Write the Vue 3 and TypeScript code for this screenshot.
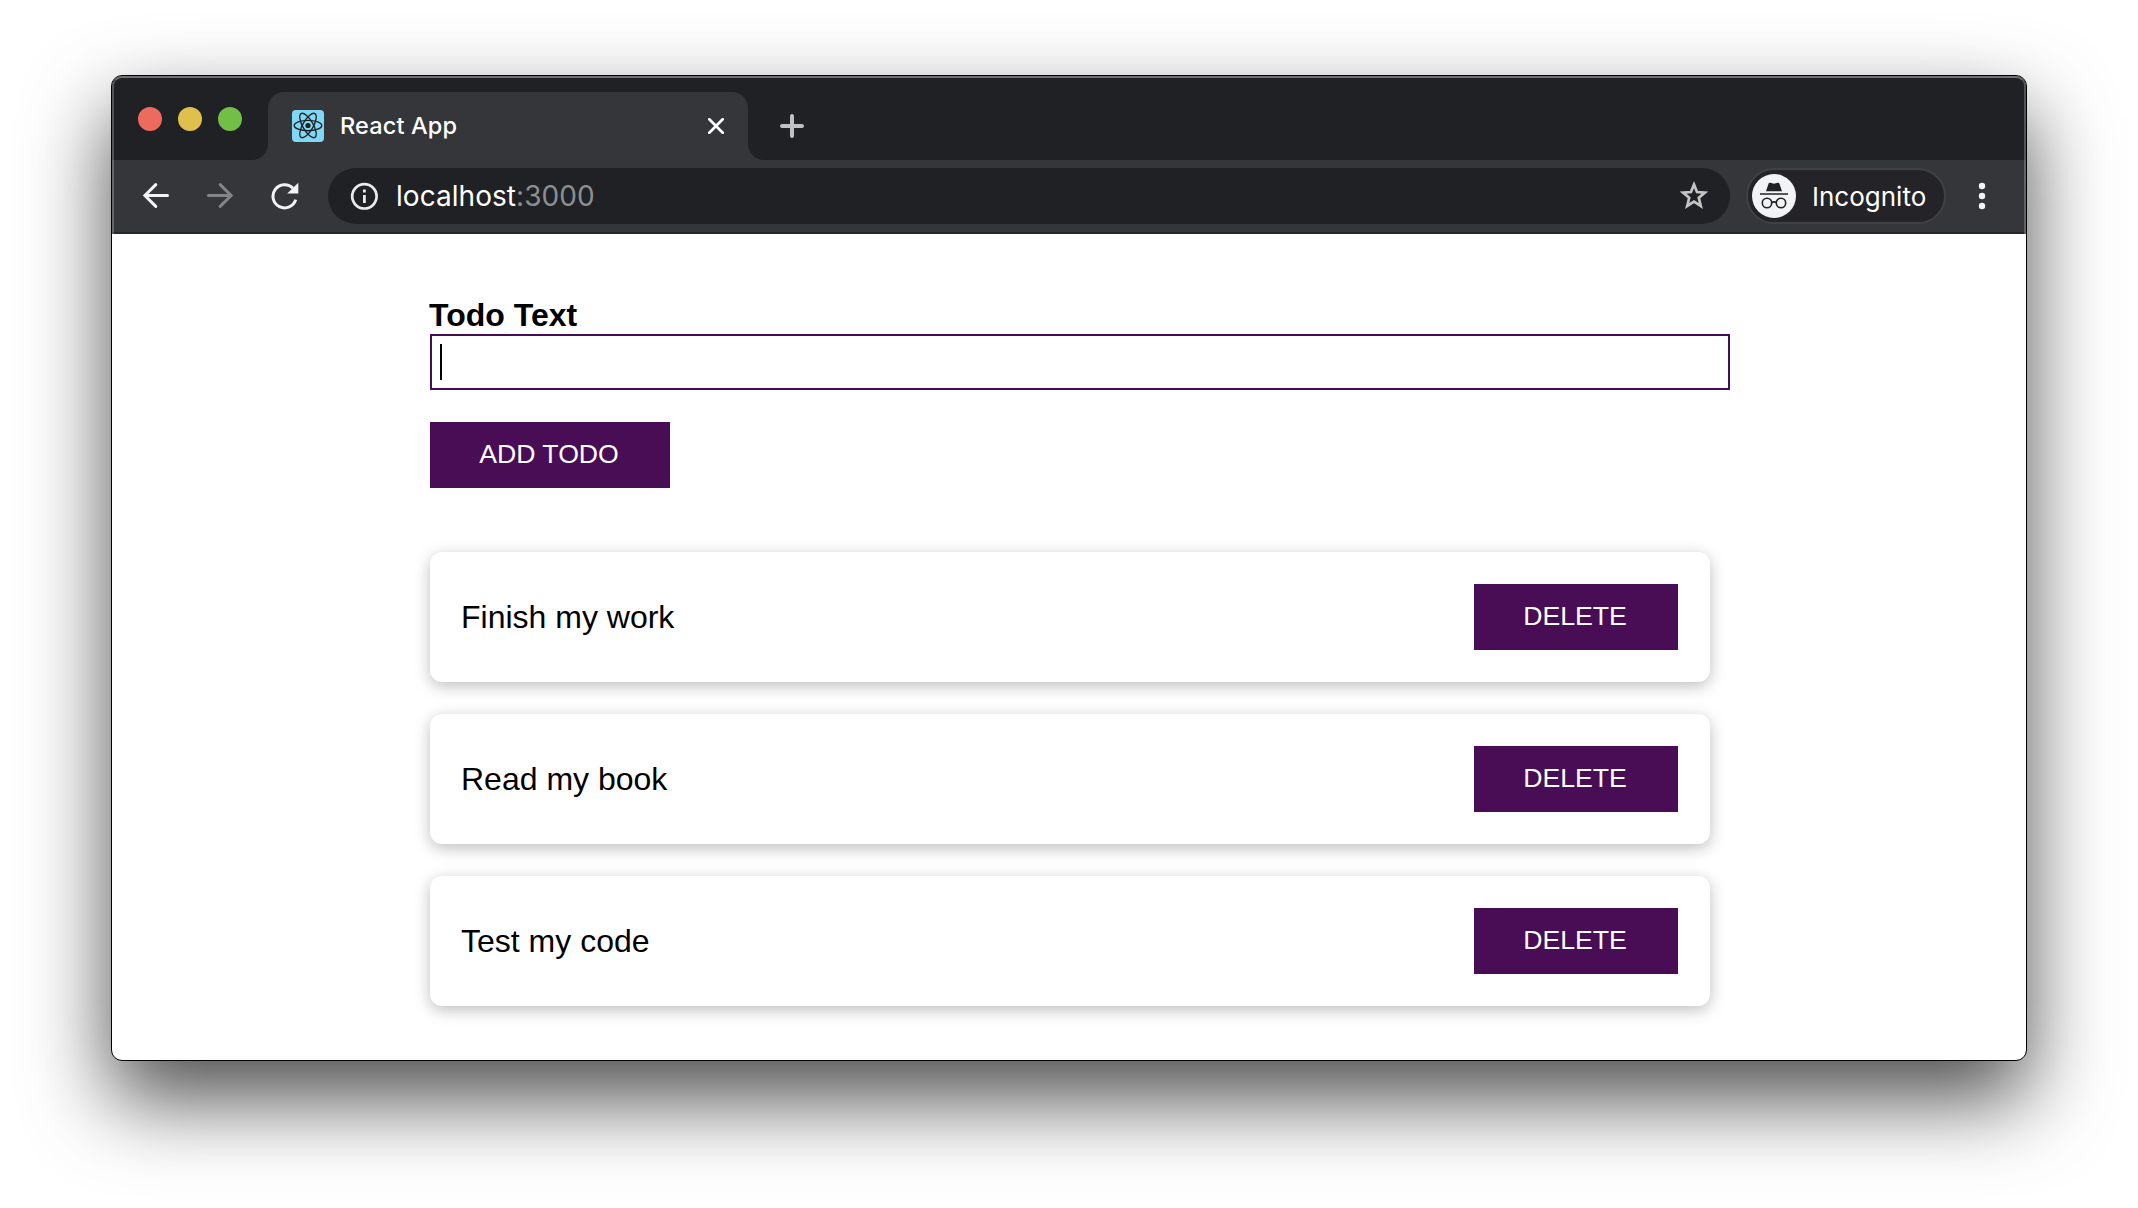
<script setup lang="ts">
import { ref } from 'vue'

interface Todo {
  id: number
  text: string
}

const todos = ref<Todo[]>([
  { id: 1, text: 'Finish my work' },
  { id: 2, text: 'Read my book' },
  { id: 3, text: 'Test my code' },
])

function removeTodo(id: number): void {
  todos.value = todos.value.filter((t) => t.id !== id)
}
</script>

<template>
  <div class="desktop">
    <div class="window">
      <div class="chrome">
        <div class="tabstrip">
          <div class="lights">
            <span class="light red"></span>
            <span class="light yellow"></span>
            <span class="light green"></span>
          </div>
          <div class="tab">
            <svg class="favicon" width="32" height="32" viewBox="0 0 32 32">
              <rect width="32" height="32" rx="4" fill="#80d8f7" />
              <g fill="none" stroke="#202124" stroke-width="1.35">
                <ellipse cx="16" cy="15.5" rx="13.8" ry="5.2" />
                <ellipse cx="16" cy="15.5" rx="13.8" ry="5.2" transform="rotate(60 16 15.5)" />
                <ellipse cx="16" cy="15.5" rx="13.8" ry="5.2" transform="rotate(120 16 15.5)" />
              </g>
              <circle cx="16" cy="15.5" r="2.6" fill="#202124" />
            </svg>
            <span class="tab-title">React App</span>
            <svg class="close" width="16" height="16" viewBox="0 0 16 16">
              <path d="M1.3 1.3 14.7 14.7M14.7 1.3 1.3 14.7" stroke="#fff" stroke-width="2.7" stroke-linecap="round" />
            </svg>
          </div>
          <svg class="plus" width="24" height="24" viewBox="0 0 24 24">
            <path d="M12 2V22M2 12H22" stroke="#bdc1c6" stroke-width="4" stroke-linecap="round" />
          </svg>
        </div>
        <div class="toolbar">
          <svg class="nav" width="28" height="28" viewBox="0 0 28 28">
            <path d="M25.5 13.5H3.2M13.8 2.6 2.9 13.5 13.8 24.4" fill="none" stroke="#f1f3f4" stroke-width="3" stroke-linecap="round" />
          </svg>
          <svg class="nav" width="28" height="28" viewBox="0 0 28 28">
            <path d="M2.5 13.5H24.8M14.2 2.6 25.1 13.5 14.2 24.4" fill="none" stroke="#848587" stroke-width="3" stroke-linecap="round" />
          </svg>
          <svg class="nav reload" width="28" height="28" viewBox="0 0 28 28">
            <path d="M24.7 17.6A11.6 11.6 0 1 1 22 6.3" fill="none" stroke="#f1f3f4" stroke-width="3" />
            <path d="M27.3 .8V11.6H16.2Z" fill="#f1f3f4" />
          </svg>
          <div class="omnibox">
            <svg width="28" height="28" viewBox="0 0 28 28">
              <circle cx="14.4" cy="14.3" r="12.2" fill="none" stroke="#e8eaed" stroke-width="2.7" />
              <path d="M14.4 12.9V20.9M14.4 7.5V10.4" stroke="#e8eaed" stroke-width="2.8" />
            </svg>
            <div class="url"><span class="host">localhost</span><span class="port">:3000</span></div>
            <svg class="star" width="30" height="30" viewBox="0 0 30 30">
              <path d="M15 3.6 18 11 26 11.6 19.8 16.8 21.8 25 15 20.6 8.2 25 10.2 16.8 4 11.6 12 11Z" fill="none" stroke="#c4c4c4" stroke-width="2.7" />
            </svg>
          </div>
          <div class="incognito">
            <svg width="44" height="44" viewBox="0 0 44 44">
              <circle cx="22" cy="22" r="22" fill="#f1f3f4" />
              <path d="M14 17.2 16.6 9.6Q17 8.4 18.3 8.8L22 9.8 25.7 8.8Q27 8.4 27.4 9.6L30 17.2Z" fill="#202124" />
              <path d="M8 20H36" stroke="#202124" stroke-width="1.7" />
              <g fill="none" stroke="#202124" stroke-width="1.6">
                <circle cx="15" cy="29" r="4.7" />
                <circle cx="29" cy="29" r="4.7" />
                <path d="M19.7 28.6Q22 27.2 24.3 28.6" />
              </g>
            </svg>
            <span class="incognito-text">Incognito</span>
          </div>
          <svg class="menu" width="8" height="28" viewBox="0 0 8 28">
            <circle cx="4" cy="4" r="3.2" fill="#f1f3f4" />
            <circle cx="4" cy="14" r="3.2" fill="#f1f3f4" />
            <circle cx="4" cy="24" r="3.2" fill="#f1f3f4" />
          </svg>
        </div>
      </div>
      <main class="page">
        <form class="form" @submit.prevent>
          <label class="label">Todo Text</label>
          <div class="input"><span class="caret"></span></div>
          <button class="btn add" type="submit">ADD TODO</button>
        </form>
        <ul class="list">
          <li v-for="todo in todos" :key="todo.id" class="card">
            <span class="todo-text">{{ todo.text }}</span>
            <button class="btn delete" type="button" @click="removeTodo(todo.id)">DELETE</button>
          </li>
        </ul>
      </main>
    </div>
  </div>
</template>

<style>
body {
  margin: 0;
  background: #fff;
}
</style>

<style scoped>
.desktop {
  box-sizing: border-box;
  width: 2138px;
  height: 1208px;
  padding: 75px 111px 0;
  overflow: hidden;
  background: #fff;
}
.window {
  box-sizing: border-box;
  width: 1916px;
  height: 986px;
  border: 1px solid #000;
  border-radius: 11px;
  background: #fff;
  box-shadow: 0 38px 84px rgba(0, 0, 0, 0.7);
  display: flex;
  flex-direction: column;
}
.chrome {
  height: 158px;
  border-radius: 10px 10px 0 0;
  background: #35363a;
  font-family: Inter, sans-serif;
  color: #fff;
  overflow: hidden;
  position: relative;
}
/* Light bevel along the top and sides of the frame */
.chrome::after {
  content: '';
  position: absolute;
  inset: 0;
  border: 2px solid rgba(255, 255, 255, 0.23);
  border-top-color: rgba(255, 255, 255, 0.36);
  border-bottom: 0;
  border-radius: 10px 10px 0 0;
  pointer-events: none;
}
.tabstrip {
  height: 84px;
  background: #202124;
  display: flex;
  align-items: flex-end;
}
.lights {
  display: flex;
  gap: 16px;
  padding-left: 26px;
  width: 130px;
  align-self: flex-start;
  margin-top: 31px;
}
.light {
  width: 24px;
  height: 24px;
  border-radius: 50%;
}
.red {
  background: #ed6a5f;
}
.yellow {
  background: #e0c04c;
}
.green {
  background: #72be47;
}
.tab {
  box-sizing: border-box;
  position: relative;
  width: 480px;
  height: 68px;
  background: #35363a;
  border-radius: 16px 16px 0 0;
  display: flex;
  align-items: center;
  padding: 0 24px;
}
.tab::before,
.tab::after {
  content: '';
  position: absolute;
  bottom: 0;
  width: 16px;
  height: 16px;
}
.tab::before {
  left: -16px;
  background: radial-gradient(circle at 0 0, transparent 15.5px, #35363a 16.5px);
}
.tab::after {
  right: -16px;
  background: radial-gradient(circle at 100% 0, transparent 15.5px, #35363a 16.5px);
}
.tab-title {
  margin-left: 16px;
  font-size: 23.5px;
  line-height: 32px;
  font-weight: 450;
  letter-spacing: 0.15px;
}
.close {
  margin-left: auto;
}
.plus {
  margin: 0 0 22px 32px;
}
.toolbar {
  height: 72px;
  border-bottom: 2px solid #282628;
  display: flex;
  align-items: center;
}
.nav {
  margin-left: 30px;
  margin-right: 6px;
}
.nav + .nav {
  margin-left: 30px;
}
.nav + .reload {
  margin-left: 30.5px;
}
.omnibox {
  box-sizing: border-box;
  width: 1402px;
  height: 56px;
  margin-left: 23.5px;
  border-radius: 28px;
  background: #202124;
  display: flex;
  align-items: center;
  padding: 0 21px 0 22px;
}
.url {
  margin-left: 18px;
  font-size: 28px;
  line-height: 40px;
  letter-spacing: 0.05px;
}
.port {
  color: #8d8e90;
}
.star {
  margin-left: auto;
}
.incognito {
  box-sizing: border-box;
  width: 200px;
  height: 56px;
  margin-left: 16px;
  border: 2px solid #414045;
  border-radius: 28px;
  background: #242327;
  display: flex;
  align-items: center;
  padding-left: 4px;
}
.incognito-text {
  margin-left: 16px;
  margin-top: 1px;
  font-size: 26px;
  line-height: 36px;
}
.menu {
  margin-left: 32px;
}
.page {
  flex: 1;
  padding-left: 318px;
  font-family: 'Liberation Sans', Arial, sans-serif;
  color: #000;
}
.form {
  display: flex;
  flex-direction: column;
  align-items: flex-start;
  padding-top: 62px;
}
.label {
  margin-left: -1px;
  font-size: 32px;
  line-height: 38px;
  font-weight: 700;
}
.input {
  box-sizing: border-box;
  width: 1300px;
  height: 56px;
  border: 2px solid #490d56;
  padding: 8px;
}
.caret {
  display: block;
  width: 2px;
  height: 36px;
  background: #000;
}
.btn {
  height: 66px;
  border: 0;
  padding: 0 2px 1px 0;
  background: #490d56;
  color: #fff;
  font-family: inherit;
  font-size: 26.67px;
}
.add {
  width: 240px;
  margin-top: 32px;
}
.delete {
  width: 204px;
}
.list {
  list-style: none;
  margin: 64px 0 0;
  padding: 0;
  width: 1280px;
  display: flex;
  flex-direction: column;
  gap: 32px;
}
.card {
  height: 130px;
  box-sizing: border-box;
  padding: 0 32px 0 31px;
  border-radius: 12px;
  background: #fff;
  box-shadow: 0 4px 16px rgba(0, 0, 0, 0.26);
  display: flex;
  align-items: center;
  justify-content: space-between;
}
.todo-text {
  font-size: 32px;
  line-height: 38px;
}
</style>
